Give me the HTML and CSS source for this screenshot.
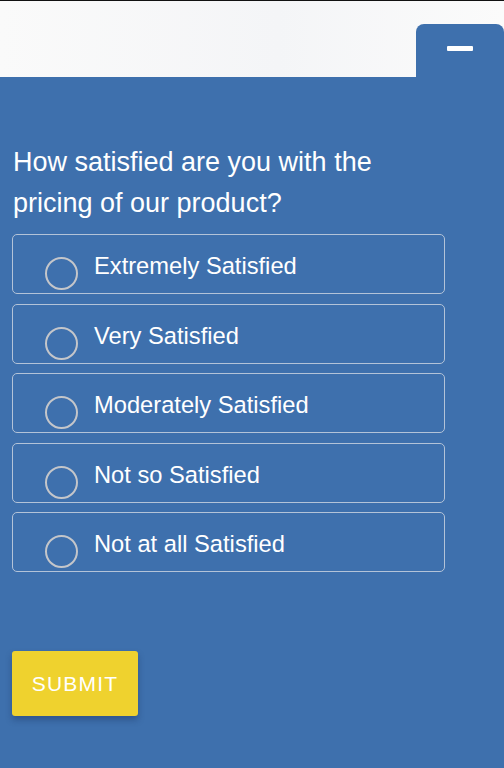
FILE: index.html
```html
<!DOCTYPE html>
<html lang="en">
<head>
  <meta charset="UTF-8">
  <meta name="viewport" content="width=device-width, initial-scale=1.0">
  <title>Survey</title>
  <link rel="stylesheet" href="styles.css">
</head>
<body>
  <div class="page">
    <!-- top strip with the collapse tab -->
    <div class="topbar">
      <div class="tab"><span class="minus"></span></div>
    </div>

    <div class="panel">
      <p class="question">How satisfied are you with the pricing of our product?</p>
      <ul class="options">
        <li class="option"><span class="radio"></span><span class="label">Extremely Satisfied</span></li>
        <li class="option"><span class="radio"></span><span class="label">Very Satisfied</span></li>
        <li class="option"><span class="radio"></span><span class="label">Moderately Satisfied</span></li>
        <li class="option"><span class="radio"></span><span class="label">Not so Satisfied</span></li>
        <li class="option"><span class="radio"></span><span class="label">Not at all Satisfied</span></li>
      </ul>
      <button class="submit">SUBMIT</button>
    </div>
  </div>
</body>
</html>
```

FILE: styles.css
```css
/* base */
body {
  margin: 0;
  font-family: "Liberation Sans", Arial, sans-serif;
  background-color: #3e70ad;
}
.page {
  height: 768px;
  display: flex;
  flex-direction: column;
  overflow: hidden;
}
.topbar {
  height: 76px;
  border-top: 1px solid #111;
  background: linear-gradient(90deg, #fafafa 0%, #f4f5f7 55%, #fbfbfb 100%);
  display: flex;
  justify-content: flex-end;
  align-items: flex-end;
}
.tab {
  width: 88px;
  height: 53px;
  background-color: #3e70ad;
  border-radius: 8px 8px 0 0;
  display: flex;
  justify-content: center;
  padding-top: 22px;
  box-sizing: border-box;
}
.minus {
  display: block;
  width: 26px;
  height: 5px;
  background-color: #fff;
  border-radius: 1px;
}
.panel {
  flex: 1;
  background-color: #3e70ad;
  padding: 0 59px 0 12px;
}
.question {
  margin: 65px 0 10px 1px;
  font-size: 27px;
  line-height: 41px;
  color: #fff;
}
.options {
  list-style: none;
  margin: 0;
  padding: 0;
  display: flex;
  flex-direction: column;
  gap: 9.5px;
}
.option {
  height: 60px;
  box-sizing: border-box;
  border: 1.5px solid #b3c3d8;
  border-radius: 5px;
  display: flex;
  align-items: flex-start;
  padding: 0 0 0 32px;
}
.radio {
  width: 33px;
  height: 33px;
  box-sizing: border-box;
  border: 2.5px solid #c4c6ca;
  border-radius: 50%;
  margin-top: 22px;
  flex-shrink: 0;
}
.label {
  margin: 17px 0 0 16px;
  font-size: 23.7px;
  line-height: 28px;
  color: #fff;
}
.submit {
  margin-top: 79px;
  width: 126px;
  height: 65px;
  border: none;
  border-radius: 3px;
  background-color: #efd22e;
  color: #fff;
  font-family: "Liberation Sans", Arial, sans-serif;
  font-size: 21px;
  letter-spacing: 1.2px;
  box-shadow: 0 4px 6px rgba(20, 40, 80, 0.35);
}
```
